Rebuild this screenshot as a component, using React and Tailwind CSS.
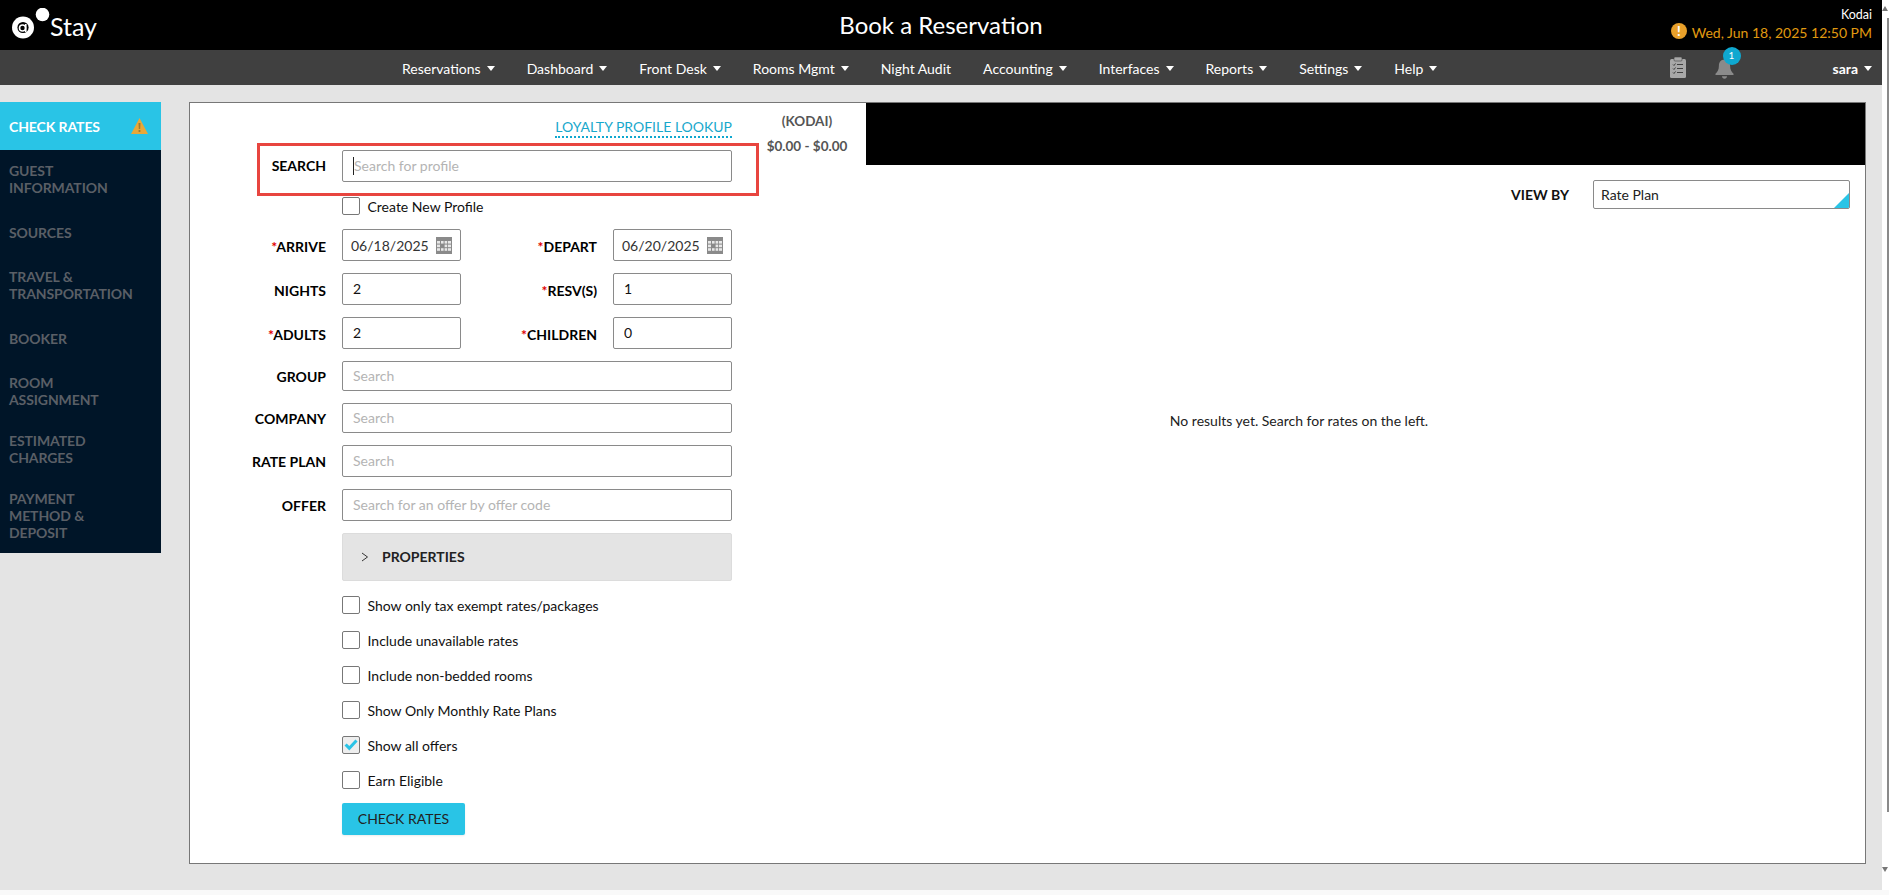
const menu = [
  { name: "Reservations", arrow: true },
  { name: "Dashboard", arrow: true },
  { name: "Front Desk", arrow: true },
  { name: "Rooms Mgmt", arrow: true },
  { name: "Night Audit" },
  { name: "Accounting", arrow: true },
  { name: "Interfaces", arrow: true },
  { name: "Reports", arrow: true },
  { name: "Settings", arrow: true },
  { name: "Help", arrow: true },
];

const steps = [
  { lines: ["GUEST", "INFORMATION"], h: "h-[62px]" },
  { lines: ["SOURCES"], h: "h-[44px]" },
  { lines: ["TRAVEL &", "TRANSPORTATION"], h: "h-[62px]" },
  { lines: ["BOOKER"], h: "h-[44px]" },
  { lines: ["ROOM", "ASSIGNMENT"], h: "h-[58px]" },
  { lines: ["ESTIMATED", "CHARGES"], h: "h-[58px]" },
  { lines: ["PAYMENT", "METHOD &", "DEPOSIT"], h: "h-[63px]" },
];

const options = [
  { label: "Include unavailable rates" },
  { label: "Include non-bedded rooms" },
  { label: "Show Only Monthly Rate Plans" },
  { label: "Show all offers", checked: true },
  { label: "Earn Eligible" },
];

function Caret() {
  return <span className="ml-[6px] inline-block h-0 w-0 border-x-[4px] border-t-[5px] border-x-transparent border-t-white" />;
}

function Logo() {
  return (
    <svg width="38" height="34" viewBox="0 0 38 34" className="shrink-0">
      <circle cx="11" cy="19.5" r="11" fill="#fff" />
      <circle cx="30.5" cy="6.5" r="6.8" fill="#fff" />
      <circle cx="11" cy="19.5" r="5.6" fill="#000" />
      <circle cx="10.5" cy="20" r="3" fill="none" stroke="#fff" strokeWidth="1.6" />
      <path d="M13.8 16v8" stroke="#fff" strokeWidth="1.6" />
    </svg>
  );
}

function ClipboardIcon() {
  return (
    <svg width="16" height="21" viewBox="0 0 16 21">
      <rect x="0" y="2" width="16" height="19" rx="1.5" fill="#a8a8a8" />
      <rect x="4" y="0" width="8" height="4" rx="1" fill="#a8a8a8" stroke="#404040" strokeWidth="0.6" />
      <path d="M7 7.5h6M7 11.5h6M7 15.5h6M3 7.5l1 1 1.5-2M3 11.5l1 1 1.5-2M3 15.5l1 1 1.5-2" stroke="#404040" strokeWidth="1" fill="none" />
    </svg>
  );
}

function BellIcon() {
  return (
    <svg width="19" height="20" viewBox="0 0 19 20">
      <path d="M9.5 0.5c-3.6 0-5.6 2.8-5.6 6.2 0 4-1.4 6-3.4 8v1.3h18v-1.3c-2-2-3.4-4-3.4-8 0-3.4-2-6.2-5.6-6.2z" fill="#8a8a8a" />
      <path d="M7 17.3h5c0 1.4-1.1 2.4-2.5 2.4S7 18.7 7 17.3z" fill="#8a8a8a" />
    </svg>
  );
}

function CalendarIcon() {
  return (
    <svg width="16" height="17" viewBox="0 0 16 17" className="shrink-0">
      <rect width="16" height="17" fill="#8a8a8a" />
      <g fill="#e8e8e8">
        <rect x="1" y="4" width="3" height="2.6" />
        <rect x="5" y="4" width="2.6" height="2.6" />
        <rect x="8.6" y="4" width="2.6" height="2.6" />
        <rect x="12" y="4" width="3" height="2.6" />
        <rect x="1" y="7.6" width="3" height="2.6" />
        <rect x="8.6" y="7.6" width="2.6" height="2.6" />
        <rect x="12" y="7.6" width="3" height="2.6" />
        <rect x="1" y="11.2" width="3" height="2.6" />
        <rect x="5" y="11.2" width="2.6" height="2.6" />
        <rect x="8.6" y="11.2" width="2.6" height="2.6" />
        <rect x="12" y="11.2" width="3" height="2.6" />
      </g>
    </svg>
  );
}

function Label({ children, required, className }) {
  return (
    <label className={"text-right text-[14px] leading-none font-bold text-black " + className}>
      {required && <span className="text-[#e00000]">*</span>}
      {children}
    </label>
  );
}

function TextInput({ value, placeholder, className }) {
  return (
    <input
      defaultValue={value}
      placeholder={placeholder}
      className={"rounded-[2px] border border-[#8a8a8a] bg-white px-[10px] pb-[2px] text-[14px] text-[#111] outline-none placeholder:text-[#b4b4b4] " + className}
    />
  );
}

function DateInput({ value }) {
  return (
    <div className="flex h-[32px] w-[119px] items-center justify-between rounded-[2px] border border-[#8a8a8a] pl-[8px] pr-[8px] text-[14px] text-[#333]">
      <span>{value}</span>
      <CalendarIcon />
    </div>
  );
}

function Check({ label, checked, className }) {
  return (
    <div className={"flex h-[18px] items-center gap-[7.5px] text-[14px] text-[#111] " + className}>
      <span className={"flex h-[18px] w-[18px] shrink-0 items-center justify-center rounded-[2px] border border-[#777] " + (checked ? "bg-[#eeeeee]" : "bg-white")}>
        {checked && (
          <svg width="14" height="12" viewBox="0 0 14 12">
            <path d="M0.5 6.5l2.2-2 2.6 2.6L11.4 0.5l2.2 2-8.3 9z" fill="#2ac3e6" />
          </svg>
        )}
      </span>
      {label}
    </div>
  );
}

function FormRow({ label, required, children, className, labelClass = "pt-[2px]" }) {
  return (
    <div className={"flex items-center " + className}>
      <Label required={required} className={"w-[136px] " + labelClass}>{label}</Label>
      <div className="ml-[16px] flex">{children}</div>
    </div>
  );
}

function PairRow({ left, right, className }) {
  return (
    <div className={"flex items-center " + className}>
      <Label required={left.required} className="w-[136px] pt-[3px]">{left.label}</Label>
      <div className="ml-[16px] w-[119px]">{left.field}</div>
      <Label required={right.required} className="w-[136px] pt-[3px]">{right.label}</Label>
      <div className="ml-[16px] w-[119px]">{right.field}</div>
    </div>
  );
}

function App() {
  return (
    <div className="flex h-[895px] w-full overflow-hidden bg-[#f9f9f9] font-['Lato',sans-serif]">
      <div className="flex h-[890px] w-[1882px] shrink-0 flex-col bg-[#e4e4e4]">
        <header className="grid h-[50px] shrink-0 grid-cols-[1fr_auto_1fr] items-center bg-black text-white">
          <div className="flex items-center pl-[12px]">
            <Logo />
            <span className="mt-[2px] text-[25px] leading-none font-normal">Stay</span>
          </div>
          <h1 className="text-[24px] font-normal">Book a Reservation</h1>
          <div className="flex flex-col items-end pr-[10px]">
            <span className="text-[12.5px] leading-[15px] mt-[-2px]">Kodai</span>
            <div className="mt-[2px] flex items-center gap-[5px] text-[14px] leading-[18px] text-[#e09a10]">
              <span className="mt-[-3px] flex h-[16px] w-[16px] items-center justify-center rounded-full bg-[#e8a02a] text-[13px] leading-none font-black text-white">!</span>
              Wed, Jun 18, 2025 12:50 PM
            </div>
          </div>
        </header>

        <nav className="relative flex h-[35px] shrink-0 items-center bg-[#404040] pl-[402px] text-[14px] text-white">
          <ul className="flex items-center gap-[32px] pt-[1px]">
            {menu.map((m) => (
              <li key={m.name} className="flex items-center">
                {m.name}
                {m.arrow && <Caret />}
              </li>
            ))}
          </ul>
          <div className="ml-auto flex items-center pr-[10px]">
            <ClipboardIcon />
            <div className="relative ml-[29px] mt-[2px]">
              <BellIcon />
              <span className="absolute left-[8px] top-[-12px] flex h-[18px] w-[18px] items-center justify-center rounded-full bg-[#0fa8d0] text-[10px] text-white">1</span>
            </div>
            <span className="ml-[99px] flex items-center pt-[2px] font-bold">sara<Caret /></span>
          </div>
        </nav>

        <div className="mt-[17px] flex items-start">
          <aside className="w-[161px] shrink-0 bg-[#001528] text-[14px] leading-[17px] font-bold tracking-[-0.1px] text-[#5a5f66]">
            <div className="flex h-[48px] items-center justify-between bg-[#29c4e6] pl-[9px] pr-[13px] text-white">
              CHECK RATES
              <svg width="17" height="16" viewBox="0 0 17 16">
                <path d="M8.5 0L17 16H0z" fill="#e8a838" />
                <path d="M7.5 5h2l-.3 6H7.8zM7.6 12h1.8v2H7.6z" fill="#a07a30" />
              </svg>
            </div>
            {steps.map((s) => (
              <div key={s.lines[0]} className={"pl-[9px] pt-[12px] " + s.h}>
                {s.lines.map((l) => (
                  <div key={l}>{l}</div>
                ))}
              </div>
            ))}
            <div className="h-[12px]" />
          </aside>

          <main className="relative ml-[28px] flex h-[762px] w-[1677px] border border-[#777] bg-white">
            <section className="w-[543px] shrink-0">
              <div className="mt-[15px] flex justify-end pr-[1px]">
                <a className="border-b-2 border-dotted border-[#0fa8d0] text-[14px] leading-[18px] text-[#18a8cc]">LOYALTY PROFILE LOOKUP</a>
              </div>
              <FormRow label="SEARCH" className="mt-[12px]" labelClass="pb-[1px]">
                <div className="relative">
                  <TextInput placeholder="Search for profile" className="h-[32px] w-[390px] pl-[11px]" />
                  <span className="absolute left-[11px] top-[7px] h-[18px] w-px bg-[#222]" />
                </div>
              </FormRow>
              <Check label="Create New Profile" className="ml-[152px] mt-[15px]" />
              <PairRow
                className="mt-[14px]"
                left={{ label: "ARRIVE", required: true, field: <DateInput value="06/18/2025" /> }}
                right={{ label: "DEPART", required: true, field: <DateInput value="06/20/2025" /> }}
              />
              <PairRow
                className="mt-[12px]"
                left={{ label: "NIGHTS", field: <TextInput value="2" className="h-[32px] w-[119px]" /> }}
                right={{ label: "RESV(S)", required: true, field: <TextInput value="1" className="h-[32px] w-[119px]" /> }}
              />
              <PairRow
                className="mt-[12px]"
                left={{ label: "ADULTS", required: true, field: <TextInput value="2" className="h-[32px] w-[119px]" /> }}
                right={{ label: "CHILDREN", required: true, field: <TextInput value="0" className="h-[32px] w-[119px]" /> }}
              />
              <FormRow label="GROUP" className="mt-[12px]">
                <TextInput placeholder="Search" className="h-[30px] w-[390px]" />
              </FormRow>
              <FormRow label="COMPANY" className="mt-[12px]">
                <TextInput placeholder="Search" className="h-[30px] w-[390px]" />
              </FormRow>
              <FormRow label="RATE PLAN" className="mt-[12px]">
                <TextInput placeholder="Search" className="h-[32px] w-[390px]" />
              </FormRow>
              <FormRow label="OFFER" className="mt-[12px]">
                <TextInput placeholder="Search for an offer by offer code" className="h-[32px] w-[390px]" />
              </FormRow>
              <div className="ml-[152px] mt-[12px] flex h-[48px] w-[390px] items-center rounded-[2px] border border-[#dcdcdc] bg-[#e4e4e4] pb-[1px] pl-[18px] text-[14px] font-bold text-[#222]">
                <svg width="8" height="10" viewBox="0 0 8 10" className="mr-[13px]">
                  <path d="M1 1l5.5 4L1 9" fill="none" stroke="#333" strokeWidth="1" />
                </svg>
                PROPERTIES
              </div>
              <Check label="Show only tax exempt rates/packages" className="ml-[152px] mt-[15px]" />
              {options.map((o) => (
                <Check key={o.label} label={o.label} checked={o.checked} className="ml-[152px] mt-[17px]" />
              ))}
              <button className="ml-[152px] mt-[14px] h-[32px] w-[123px] rounded-[2px] bg-[#29c4e6] pb-[2px] text-[14px] text-[#222] shadow-[0_1px_2px_rgba(0,0,0,0.08)]">CHECK RATES</button>
            </section>

            <section className="flex min-w-0 flex-1 flex-col">
              <div className="flex h-[62px] shrink-0">
                <div className="flex w-[133px] shrink-0 flex-col items-center pl-[15px] text-[13.5px] font-bold text-[#555]">
                  <span className="mt-[9px] leading-[18px]">(KODAI)</span>
                  <span className="mt-[7px] leading-[18px]">$0.00 - $0.00</span>
                </div>
                <div className="flex-1 bg-black" />
              </div>
              <div className="mt-[15px] flex items-center justify-end pr-[15px]">
                <span className="text-[14px] font-bold text-[#111]">VIEW BY</span>
                <div className="relative ml-[24px] flex h-[29px] w-[257px] items-center overflow-hidden rounded-[2px] border border-[#8a8a8a] pl-[7px] text-[14px] text-[#222]">
                  Rate Plan
                  <span className="absolute bottom-0 right-0 h-0 w-0 border-b-[15px] border-l-[15px] border-b-[#29c4e6] border-l-transparent" />
                </div>
              </div>
              <p className="mt-[201px] text-center text-[14px] text-[#222]">No results yet. Search for rates on the left.</p>
            </section>

            {/* red highlight drawn over the search row */}
            <div className="pointer-events-none absolute left-[67px] top-[40px] h-[53px] w-[502px] border-[3px] border-[#e8453f]" />
          </main>
        </div>
      </div>

      <div className="relative h-[890px] flex-1 bg-white">
        <div className="absolute right-0 top-[18px] h-[794px] w-[2px] bg-[#8a8a8a]" />
        <div className="absolute right-[1px] top-[6px] h-0 w-0 border-x-[3px] border-b-[5px] border-x-transparent border-b-[#777]" />
        <div className="absolute right-[1px] top-[867px] h-0 w-0 border-x-[3px] border-t-[5px] border-x-transparent border-t-[#777]" />
      </div>
    </div>
  );
}

export default App;
